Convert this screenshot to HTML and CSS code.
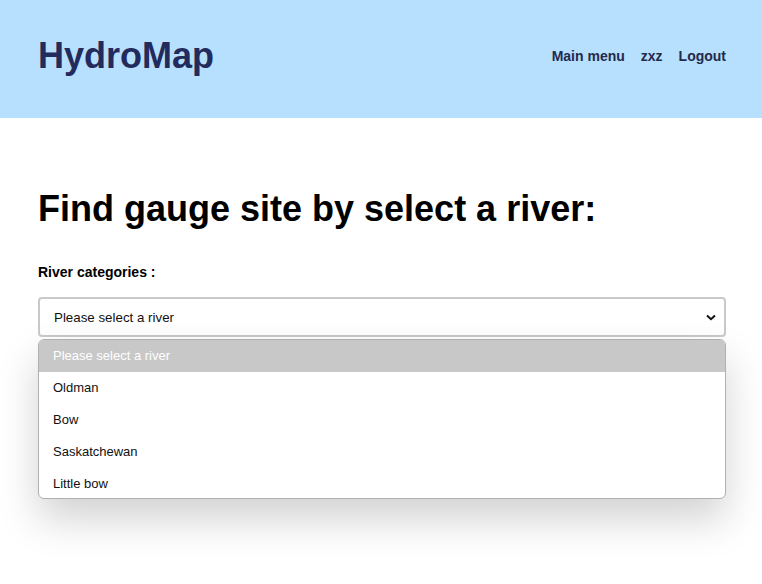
FILE: index.html
```html
<!DOCTYPE html>
<html>
<head>
<meta charset="utf-8">
<link rel="stylesheet" href="styles.css">
</head>
<body>
<header class="topbar">
  <div class="brand">HydroMap</div>
  <nav class="nav">
    <a href="#">Main menu</a>
    <a href="#">zxz</a>
    <a href="#">Logout</a>
  </nav>
</header>
<main class="content">
  <h1 class="title">Find gauge site by select a river:</h1>
  <div class="label">River categories :</div>
  <div class="select">
    <span>Please select a river</span>
    <svg class="chev" width="10" height="7" viewBox="0 0 10 7"><path d="M1 1.5 L5 5.2 L9 1.5" fill="none" stroke="#111" stroke-width="2"/></svg>
  </div>
  <div class="listbox">
    <div class="opt selected">Please select a river</div>
    <div class="opt">Oldman</div>
    <div class="opt">Bow</div>
    <div class="opt">Saskatchewan</div>
    <div class="opt">Little bow</div>
  </div>
</main>
</body>
</html>
```
FILE: styles.css
```css
html, body { margin: 0; padding: 0; background: #fff; }
body { font-family: "Liberation Sans", Arial, sans-serif; }
.topbar {
  height: 118px;
  background: #b7dffe;
  display: flex;
  align-items: center;
  justify-content: space-between;
  padding: 0 36px 6px 38px;
  box-sizing: border-box;
}
.brand { font-size: 36px; font-weight: bold; color: #232a5c; }
.nav { display: flex; gap: 16px; }
.nav a { font-size: 14px; font-weight: bold; color: #232a4c; text-decoration: none; }
.content { padding: 69px 36px 100px 38px; }
.title { margin: 0; font-size: 36px; font-weight: bold; color: #000; line-height: 44px; }
.label { margin-top: 33px; font-size: 14px; font-weight: bold; color: #000; }
.select {
  margin-top: 17px;
  height: 40px; box-sizing: border-box;
  border: 2px solid #c9c9c9; border-radius: 4px;
  display: flex; align-items: center; justify-content: space-between;
  padding: 0 8px 0 14px; font-size: 13.33px; color: #111;
}
.chev { margin-top: 1px; }
.listbox {
  margin-top: 2px;
  background: #fff; border: 1px solid #b0b0b0; border-radius: 6px; overflow: hidden;
  box-shadow: 0 20px 40px rgba(0,0,0,0.18);
}
.opt { height: 32px; line-height: 32px; padding-left: 14px; font-size: 13px; color: #111; }
.opt:last-child { height: 30px; }
.opt.selected { background: #c8c8c8; color: #fff; }
```
